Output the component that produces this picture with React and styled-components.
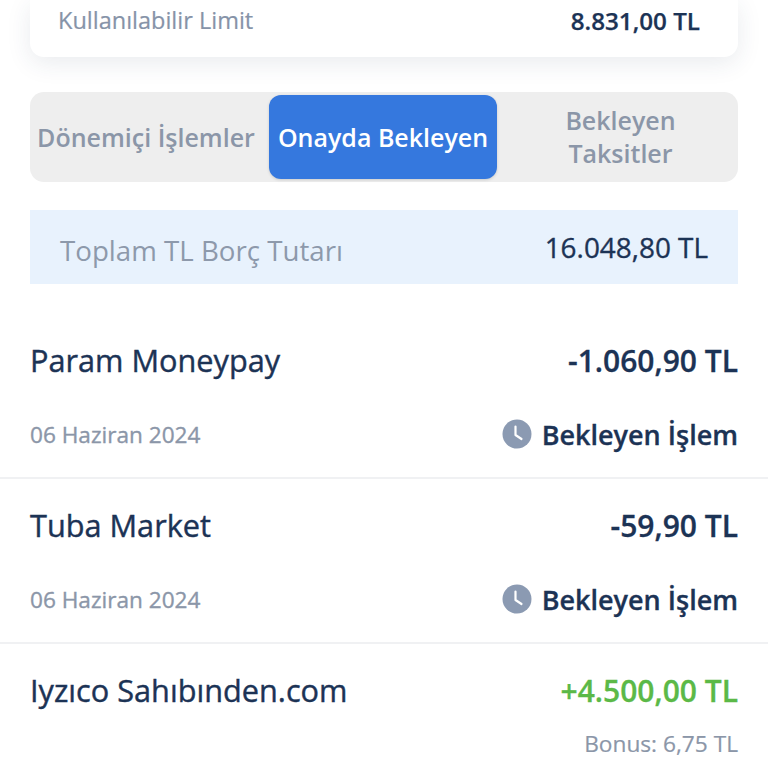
import React from "react";
import styled, { createGlobalStyle } from "styled-components";

const rows = [
  { id: 1, name: "Param Moneypay", amount: "-1.060,90 TL", date: "06 Haziran 2024", pending: true },
  { id: 2, name: "Tuba Market", amount: "-59,90 TL", date: "06 Haziran 2024", pending: true },
  { id: 3, name: "Iyzıco Sahıbınden.com", amount: "+4.500,00 TL", bonus: "Bonus: 6,75 TL", positive: true },
];

const ClockIcon = () => (
  <svg width="30" height="30" viewBox="0 0 30 30" aria-hidden="true">
    <circle cx="15" cy="15" r="14.5" fill="#8b9ab2" />
    <path d="M13.5 7.5v8.5l6 4" fill="none" stroke="#fff" strokeWidth="2.2" strokeLinecap="round" strokeLinejoin="round" />
  </svg>
);

const App = () => (
  <>
    <GlobalStyle />
    <Page>
      <LimitCard>
        <LimitLabel>Kullanılabilir Limit</LimitLabel>
        <LimitValue>8.831,00 TL</LimitValue>
      </LimitCard>

      <Tabs>
        <Tab $kind="first">Dönemiçi İşlemler</Tab>
        <Tab $kind="active">Onayda Bekleyen</Tab>
        <Tab $kind="last">Bekleyen Taksitler</Tab>
      </Tabs>

      <Summary>
        <SummaryLabel>Toplam TL Borç Tutarı</SummaryLabel>
        <SummaryValue>16.048,80 TL</SummaryValue>
      </Summary>

      <List>
        {rows.map((row) => (
          <Row key={row.id}>
            <RowLine>
              <RowName>{row.name}</RowName>
              <RowAmount $positive={row.positive}>{row.amount}</RowAmount>
            </RowLine>
            {row.pending ? (
              <RowMeta>
                <RowDate>{row.date}</RowDate>
                <Status>
                  <ClockIcon />
                  <StatusText>Bekleyen İşlem</StatusText>
                </Status>
              </RowMeta>
            ) : (
              <BonusLine>{row.bonus}</BonusLine>
            )}
          </Row>
        ))}
      </List>
    </Page>
  </>
);

export default App;

const GlobalStyle = createGlobalStyle`
  html, body {
    margin: 0;
    padding: 0;
    background: #ffffff;
    overflow: hidden;
  }
  * {
    box-sizing: border-box;
  }
`;

const Page = styled.div`
  width: 768px;
  height: 768px;
  overflow: hidden;
  padding: 0 30px;
  background: #ffffff;
  font-family: "Open Sans", "Noto Sans", sans-serif;
  color: #1c3355;
`;

const LimitCard = styled.div`
  height: 57px;
  padding: 0 38px 17px 28px;
  display: flex;
  align-items: center;
  justify-content: space-between;
  background: #ffffff;
  border-radius: 0 0 14px 14px;
  box-shadow: 0 6px 24px rgba(40, 60, 90, 0.1);
`;

const LimitLabel = styled.span`
  font-size: 23.5px;
  color: #8693a8;
  -webkit-text-stroke: 0.2px #8693a8;
`;

const LimitValue = styled.span`
  font-size: 24.2px;
  font-weight: 600;
  -webkit-text-stroke: 0.25px #1c3355;
`;

const Tabs = styled.div`
  margin-top: 35px;
  height: 90px;
  padding: 3px 0;
  display: grid;
  grid-template-columns: 239px 228px 1fr;
  background: #eeeeee;
  border-radius: 14px;
`;

const tabPadding = { first: "0 7px 0 0", active: "0", last: "0 37px 0 43px" };

const Tab = styled.div`
  display: flex;
  align-items: center;
  justify-content: center;
  text-align: center;
  padding: ${(p) => tabPadding[p.$kind]};
  white-space: ${(p) => (p.$kind === "last" ? "normal" : "nowrap")};
  font-size: 25px;
  line-height: 33px;
  font-weight: 600;
  border-radius: 12px;
  color: ${(p) => (p.$kind === "active" ? "#ffffff" : "#8b96a8")};
  background: ${(p) => (p.$kind === "active" ? "#3578de" : "transparent")};
  box-shadow: ${(p) => (p.$kind === "active" ? "0 1px 3px rgba(0, 0, 0, 0.15)" : "none")};
`;

const Summary = styled.div`
  margin-top: 28px;
  height: 74px;
  padding: 0 30px;
  display: flex;
  align-items: center;
  justify-content: space-between;
  background: #e8f2fd;
`;

const SummaryLabel = styled.span`
  font-size: 27.7px;
  color: #8d99ab;
  position: relative;
  top: 3px;
`;

const SummaryValue = styled.span`
  font-size: 27.9px;
  -webkit-text-stroke: 0.35px #1c3355;
`;

const List = styled.div`
  margin: 30px -30px 0;
`;

const Row = styled.div`
  height: 165px;
  padding: 27px 30px 0;
  border-bottom: 2px solid #f0f1f3;

  &:last-child {
    border-bottom: none;
  }
`;

const RowLine = styled.div`
  display: flex;
  align-items: center;
  justify-content: space-between;
  height: 38px;
`;

const RowName = styled.span`
  font-size: 30.7px;
  -webkit-text-stroke: 0.4px #1c3355;
`;

const RowAmount = styled.span`
  font-size: 30px;
  font-weight: 600;
  -webkit-text-stroke: 0.3px ${(p) => (p.$positive ? "#5bb947" : "#1c3355")};
  color: ${(p) => (p.$positive ? "#5bb947" : "#1c3355")};
`;

const RowMeta = styled.div`
  margin-top: 36px;
  height: 38px;
  display: flex;
  align-items: center;
  justify-content: space-between;
`;

const RowDate = styled.span`
  font-size: 22.6px;
  color: #8b96a8;
  -webkit-text-stroke: 0.35px #8b96a8;
`;

const Status = styled.span`
  display: flex;
  align-items: center;
  gap: 10px;
`;

const StatusText = styled.span`
  margin-top: 2px;
  font-size: 27px;
  line-height: 34px;
  font-weight: 600;
  -webkit-text-stroke: 0.3px #1c3355;
`;

const BonusLine = styled.div`
  margin-top: 19px;
  text-align: right;
  font-size: 22.7px;
  color: #8b96a8;
  -webkit-text-stroke: 0.2px #8b96a8;
`;
